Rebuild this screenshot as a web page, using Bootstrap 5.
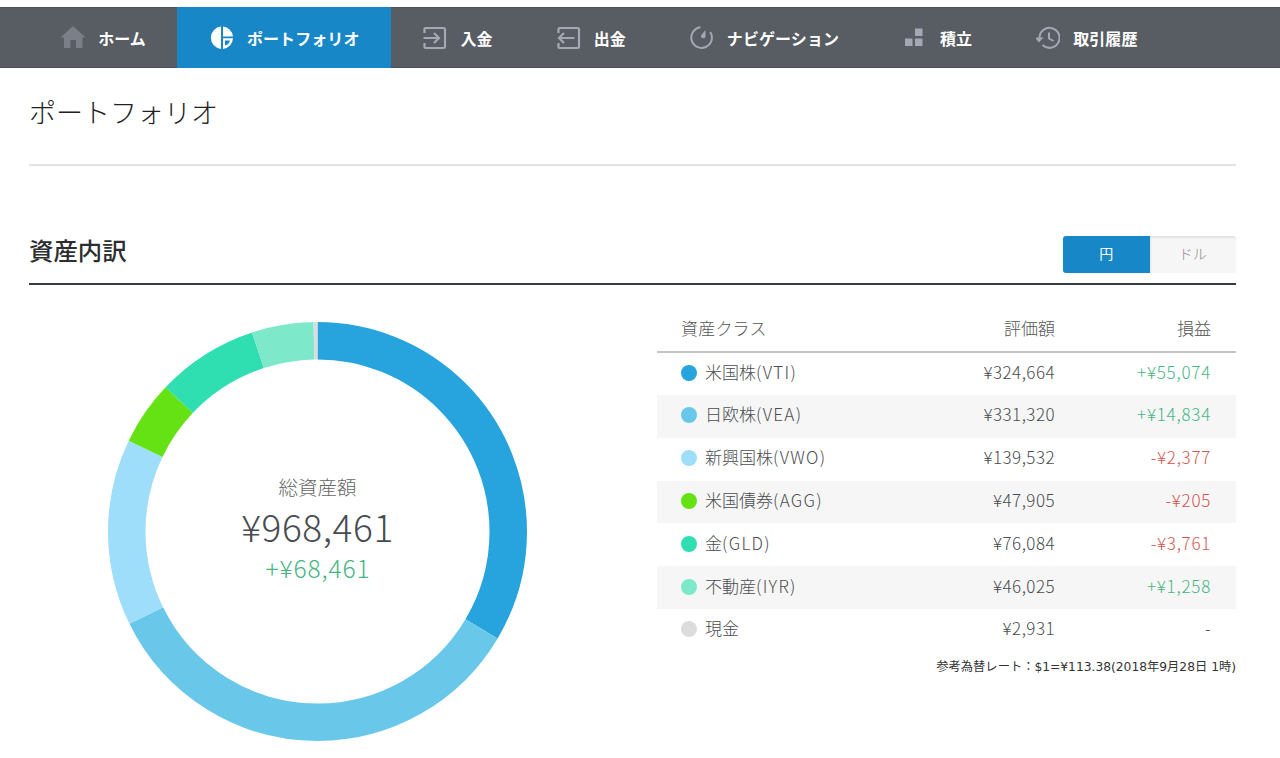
<!DOCTYPE html>
<html lang="ja">
<head>
<meta charset="utf-8">
<meta name="viewport" content="width=device-width, initial-scale=1">
<title>ポートフォリオ</title>
<link href="https://cdn.jsdelivr.net/npm/bootstrap@5.3.0/dist/css/bootstrap.min.css" rel="stylesheet">
<style>
body{font-family:"Noto Sans CJK JP",sans-serif;color:#4a4c50;background:#fff;overflow:hidden;height:758px}
.topbar{margin-top:7px;height:61px;background:#575d63;padding:0 0 0 28.4px;border-top:1px solid #4c5157;border-bottom:1px solid #4c5157}
.topbar .nav-link{height:61px;margin-top:-1px;padding:0 31.2px 0 32.8px;color:#fff;font-size:16px;letter-spacing:.08px;font-weight:700;line-height:24px;gap:13px;white-space:nowrap}
.topbar .nav-link.active{background:#1787c7}
.topbar svg{width:24px;height:24px;flex:none;color:#a4a8b5}
.topbar .active svg{color:#fff}
.content{width:1207px;margin-left:29px}
.page-title{height:98px;padding-top:24px;border-bottom:2px solid #e2e2e2;font-size:27px;line-height:40px;font-weight:300;color:#222;margin:0}
.section-head{height:50px;margin-top:69px;border-bottom:2px solid #373c42}
.section-head h2{font-size:24.4px;font-weight:500;color:#2b2d30;line-height:36px;margin:-3px 0 0}
.currency{height:37px;margin-top:1px;width:173px}
.currency .btn{width:50%;border:0;padding:0 0 2px;font-size:14px;line-height:35px;font-weight:300;border-radius:3px}
.currency .btn.on{background:#1787c7;color:#fff;font-weight:400}
.currency .btn.off{background:#f6f6f6;color:#888;box-shadow:inset 1px 2px 2px #e3e3e3}
.chart{width:419px;height:419px;margin:37px 130px 0 79px;flex:none}
.total{position:absolute;inset:0;padding-top:149px;text-align:center;font-weight:300}
.total .caption-text{font-size:19.5px;line-height:32px;color:#666}
.total .amount{font-size:37px;line-height:48px;letter-spacing:.6px;color:#484c52;margin-top:-1px}
.total .diff{font-size:24.5px;line-height:36px;letter-spacing:.9px;padding-left:1px}
.assets{width:579px;margin-top:22px}
.assets table{font-size:17px;font-weight:300;line-height:25px;margin:0;table-layout:fixed;--bs-table-color:#4a4c50}
.assets .table th{font-weight:300;height:45px;padding:7px 25px 11px;border-bottom:2px solid #c4c4c4;color:#555}
.assets .table td{height:42.8px;padding:6.400px 25px 11.400px;border:0;color:#4a4c50}
.assets .table tbody tr:first-child td{height:42px;padding-bottom:10.600px}
.assets .table tr>:first-child{padding-left:24px}
.assets .table th:first-child{letter-spacing:.2px}
.assets .table td.text-end{letter-spacing:.45px}
.assets .table td.plus{letter-spacing:.75px}
.assets .table td.minus{letter-spacing:.7px}
.tick{letter-spacing:1.300px}
.assets tbody tr:nth-child(even) td{background:#f6f6f6}
.dot{width:16px;height:16px;border-radius:50%;display:inline-block;margin-right:8px;vertical-align:-2px}
.assets .table .plus,.plus{color:#46b584}
.assets .table .minus{color:#d0574f}
.c1{background:#27a3dd}.c2{background:#69c8ea}.c3{background:#9fdefb}.c4{background:#64e214}.c5{background:#30dfb1}.c6{background:#7de9ca}.c7{background:#dcdcdc}
.rate{font-size:12.28px;line-height:20px;margin-top:5px;color:#333;font-family:"DejaVu Sans","Noto Sans CJK JP",sans-serif;white-space:nowrap}
</style>
</head>
<body>
<nav class="topbar">
<ul class="nav flex-nowrap">
<li class="nav-item"><a class="nav-link d-flex align-items-center" href="#"><svg viewBox="0 0 24 24"><path fill="#7b7f88" d="M12 0 24.5 11.5H21.5V22H15V14H9.500V22H3V11.500H-.5z"/></svg>ホーム</a></li>
<li class="nav-item"><a class="nav-link active d-flex align-items-center" href="#"><svg viewBox="0 0 24 24" fill="currentColor"><path d="M11 .6V22.900A11.200 11.200 0 0 1 11 .6zM13 .6A11.200 11.200 0 0 1 23 10.500H13z"/><path fill-rule="evenodd" d="M13 12.300H23A11 11 0 0 1 13 22.900zM15 14.500V19.500Q19 18.500 20 14.500z"/></svg>ポートフォリオ</a></li>
<li class="nav-item"><a class="nav-link d-flex align-items-center" href="#"><svg viewBox="0 0 24 24" fill="none" stroke="currentColor" stroke-width="2.200"><path d="M1.500 7V3Q1.500 2 2.500 2H20.500Q22 2 22 3V21Q22 22 20.500 22H2.500Q1.500 22 1.500 21V17M.5 12H15.500M11 7 16 12 11 17"/></svg>入金</a></li>
<li class="nav-item"><a class="nav-link d-flex align-items-center" href="#"><svg viewBox="0 0 24 24" fill="none" stroke="currentColor" stroke-width="2.200"><path d="M1.500 7V3Q1.500 2 2.500 2H20.500Q22 2 22 3V21Q22 22 20.500 22H2.500Q1.500 22 1.500 21V17M17.500 12H2M7 7 2 12 7 17"/></svg>出金</a></li>
<li class="nav-item"><a class="nav-link d-flex align-items-center" href="#"><svg viewBox="0 0 24 24"><path d="M10.500 1.300A10.300 10.300 0 1 0 20.300 6" fill="none" stroke="currentColor" stroke-width="2"/><path fill="currentColor" d="M15.500 4V10.500A2.200 2.200 0 1 1 11 9.500z"/></svg>ナビゲーション</a></li>
<li class="nav-item"><a class="nav-link d-flex align-items-center" href="#"><svg viewBox="0 0 24 24" fill="currentColor"><path d="M12 2.500H19.500V10H12zM2 12.500H9.500V20H2zM12 12.500H19.500V20H12z"/></svg>積立</a></li>
<li class="nav-item"><a class="nav-link d-flex align-items-center" href="#"><svg viewBox="0 0 24 24"><path d="M3.500 12A10 10 0 1 1 6.500 19M13 6.500V12.500L17.500 15" fill="none" stroke="currentColor" stroke-width="2"/><path fill="currentColor" d="M-1 11.500H7.500L3 16.500z"/></svg>取引履歴</a></li>
</ul>
</nav>
<main class="content">
<h1 class="page-title">ポートフォリオ</h1>
<div class="section-head d-flex justify-content-between align-items-start">
<h2>資産内訳</h2>
<div class="currency d-flex"><button class="btn on rounded-end-0">円</button><button class="btn off rounded-start-0">ドル</button></div>
</div>
<div class="d-flex align-items-start">
<div class="chart position-relative">
<svg class="d-block" width="419" height="419" viewBox="0 0 419 419"><g fill="none" stroke-width="37.500" transform="rotate(-90 209.500 209.500)">
<circle cx="209.500" cy="209.500" r="190.750" stroke="#27a3dd" pathLength="968461" stroke-dasharray="324664 968461"/>
<circle cx="209.500" cy="209.500" r="190.750" stroke="#69c8ea" pathLength="968461" stroke-dasharray="331320 968461" stroke-dashoffset="-324664"/>
<circle cx="209.500" cy="209.500" r="190.750" stroke="#9fdefb" pathLength="968461" stroke-dasharray="139532 968461" stroke-dashoffset="-655984"/>
<circle cx="209.500" cy="209.500" r="190.750" stroke="#64e214" pathLength="968461" stroke-dasharray="47905 968461" stroke-dashoffset="-795516"/>
<circle cx="209.500" cy="209.500" r="190.750" stroke="#30dfb1" pathLength="968461" stroke-dasharray="76084 968461" stroke-dashoffset="-843421"/>
<circle cx="209.500" cy="209.500" r="190.750" stroke="#7de9ca" pathLength="968461" stroke-dasharray="46025 968461" stroke-dashoffset="-919505"/>
<circle cx="209.500" cy="209.500" r="190.750" stroke="#dcdcdc" pathLength="968461" stroke-dasharray="2931 968461" stroke-dashoffset="-965530"/>
</g></svg>
<div class="total"><div class="caption-text">総資産額</div><div class="amount">¥968,461</div><div class="diff plus">+¥68,461</div></div>
</div>
<div class="assets">
<table class="table">
<colgroup><col style="width:250px"><col style="width:173px"><col style="width:156px"></colgroup>
<thead><tr><th>資産クラス</th><th class="text-end">評価額</th><th class="text-end">損益</th></tr></thead>
<tbody>
<tr><td><span class="dot c1"></span>米国株<span class="tick">(VTI)</span></td><td class="text-end">¥324,664</td><td class="text-end plus">+¥55,074</td></tr>
<tr><td><span class="dot c2"></span>日欧株<span class="tick">(VEA)</span></td><td class="text-end">¥331,320</td><td class="text-end plus">+¥14,834</td></tr>
<tr><td><span class="dot c3"></span>新興国株<span class="tick">(VWO)</span></td><td class="text-end">¥139,532</td><td class="text-end minus">-¥2,377</td></tr>
<tr><td><span class="dot c4"></span>米国債券<span class="tick">(AGG)</span></td><td class="text-end">¥47,905</td><td class="text-end minus">-¥205</td></tr>
<tr><td><span class="dot c5"></span>金<span class="tick">(GLD)</span></td><td class="text-end">¥76,084</td><td class="text-end minus">-¥3,761</td></tr>
<tr><td><span class="dot c6"></span>不動産<span class="tick">(IYR)</span></td><td class="text-end">¥46,025</td><td class="text-end plus">+¥1,258</td></tr>
<tr><td><span class="dot c7"></span>現金</td><td class="text-end">¥2,931</td><td class="text-end">-</td></tr>
</tbody>
</table>
<p class="rate text-end mb-0">参考為替レート：$1=¥113.38(2018年9月28日 1時)</p>
</div>
</div>
</main>
<script src="https://cdn.jsdelivr.net/npm/bootstrap@5.3.0/dist/js/bootstrap.bundle.min.js"></script>
</body>
</html>
